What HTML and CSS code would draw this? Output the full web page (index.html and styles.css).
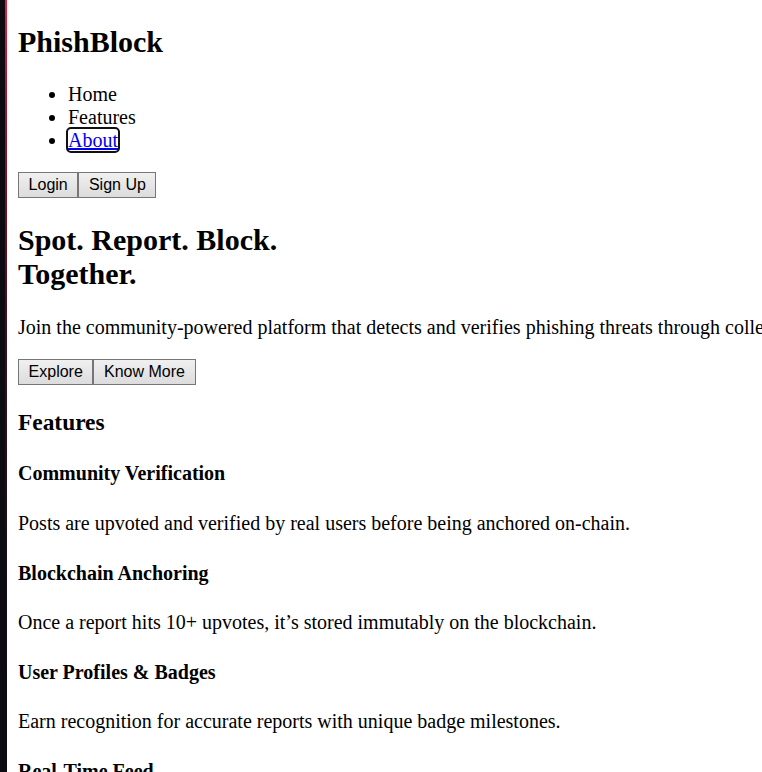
FILE: index.html
```html
<!DOCTYPE html>
<html lang="en">
<head>
<meta charset="utf-8">
<title>PhishBlock</title>
<link rel="stylesheet" href="styles.css">
</head>
<body>
<header class="site-header">
  <h1 class="logo">PhishBlock</h1>
  <nav class="site-nav">
    <ul class="nav-list">
      <li>Home</li>
      <li>Features</li>
      <li><a href="#about" class="nav-link is-focused">About</a></li>
    </ul>
  </nav>
  <div class="btn-row"><button class="btn">Login</button><button class="btn">Sign Up</button></div>
</header>
<section class="hero">
  <h1 class="hero-title">Spot. Report. Block.<br>Together.</h1>
  <p class="hero-text">Join the community-powered platform that detects and verifies phishing threats through collective intelligence and blockchain verification.</p>
  <div class="btn-row"><button class="btn">Explore</button><button class="btn">Know More</button></div>
</section>
<section class="features">
  <h2 class="section-title">Features</h2>
  <div class="feature">
    <h3 class="feature-title">Community Verification</h3>
    <p class="feature-text">Posts are upvoted and verified by real users before being anchored on-chain.</p>
  </div>
  <div class="feature">
    <h3 class="feature-title">Blockchain Anchoring</h3>
    <p class="feature-text">Once a report hits 10+ upvotes, it’s stored immutably on the blockchain.</p>
  </div>
  <div class="feature">
    <h3 class="feature-title">User Profiles &amp; Badges</h3>
    <p class="feature-text">Earn recognition for accurate reports with unique badge milestones.</p>
  </div>
  <div class="feature">
    <h3 class="feature-title">Real-Time Feed</h3>
    <p class="feature-text">See the latest phishing reports from the community as they happen.</p>
  </div>
</section>
</body>
</html>
```

FILE: styles.css
```css
html {
  overflow: hidden;
  background:
    linear-gradient(to bottom, #e3203c 0%, #9a142c 15%, #4a0c1a 40%, #160a10 75%, #0b0b11 100%) 5px 0 / 2px 100% no-repeat fixed,
    linear-gradient(#0b0b11, #0b0b11) 0 0 / 5px 100% no-repeat fixed,
    #ffffff;
}

body {
  margin: 0 0 8px 18px;
  font-family: "Liberation Serif", "Times New Roman", serif;
  font-size: 20px;
  color: #000;
}

.logo {
  font-size: 30px;
  font-weight: bold;
  margin: 24.7px 0;
}

.hero-title {
  font-size: 30px;
  font-weight: bold;
  margin: 24.9px 0;
}

.nav-list {
  margin: 20px 0;
  padding-left: 50px;
  list-style: disc;
}

.nav-link {
  color: #0000ee;
  text-decoration: underline;
}

.is-focused {
  outline: 2px solid #101010;
  outline-offset: 0;
  border-radius: 3px;
}

.btn-row {
  display: flex;
}

.btn {
  font-family: "Liberation Sans", Arial, sans-serif;
  font-size: 16px;
  line-height: normal;
  color: #000;
  margin: 0;
  padding: 3px 9.6px;
  border: 1px solid #767676;
  border-radius: 0;
  background: linear-gradient(#f0f0f0, #dcdcdc);
}

.hero-text {
  margin: 20px 0;
  white-space: nowrap;
}

.section-title {
  font-size: 23.4px;
  font-weight: bold;
  margin: 23.6px 0;
}

.feature-title {
  font-size: 20px;
  font-weight: bold;
  margin: 26.6px 0;
}

.feature-text {
  margin: 20px 0;
}
```
